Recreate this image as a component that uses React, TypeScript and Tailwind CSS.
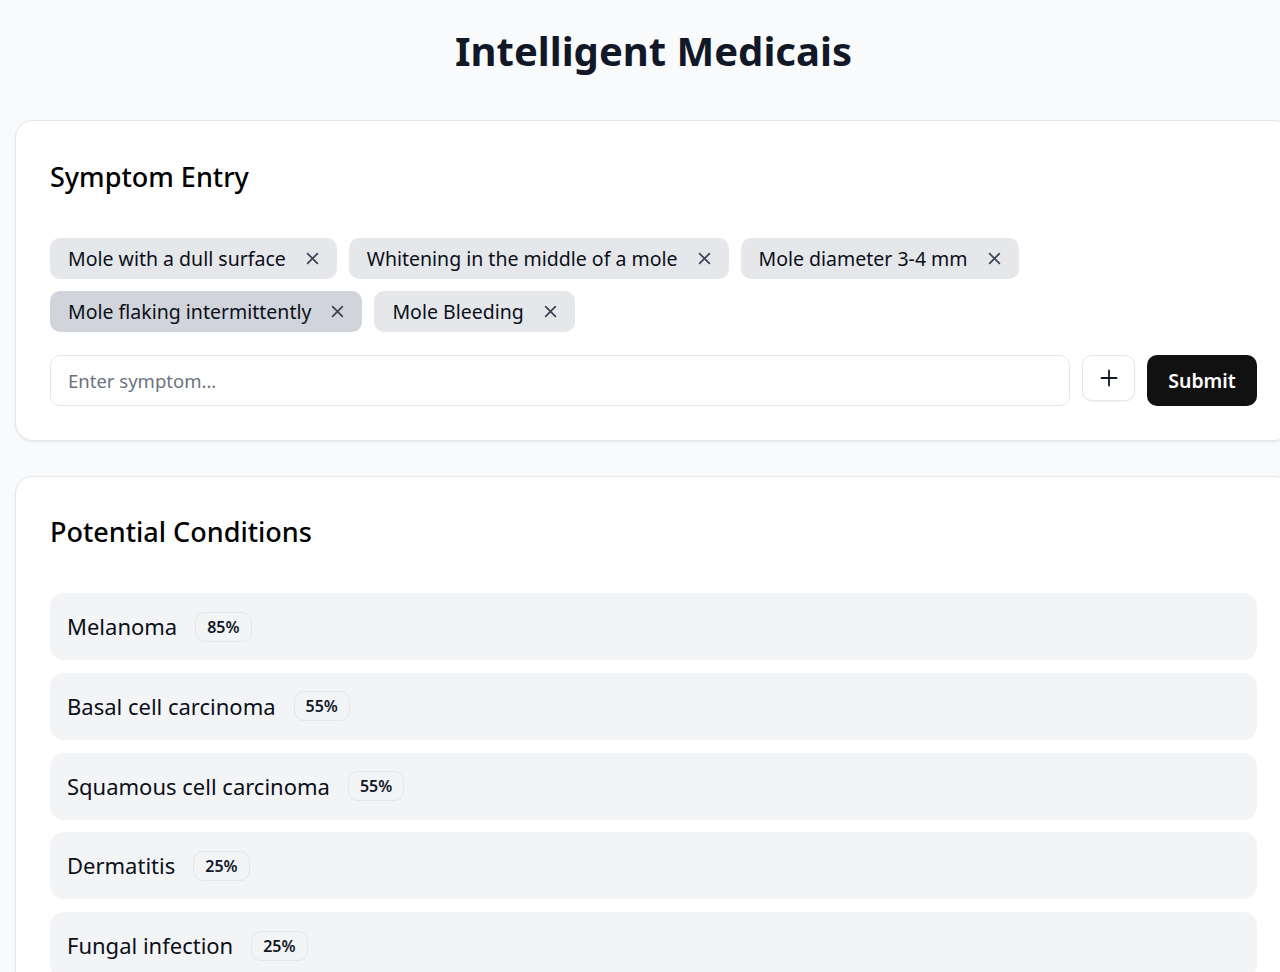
import React from "react";

const font = { fontFamily: '"Noto Sans", "Open Sans", sans-serif' };

function XIcon() {
  return (
    <svg width="13" height="13" viewBox="0 0 12 12" fill="none" stroke="#374151" strokeWidth="1.5" strokeLinecap="round">
      <path d="M1.5 1.5 L10.5 10.5 M10.5 1.5 L1.5 10.5" />
    </svg>
  );
}

function Chip({ label, dark }: { label: string; dark?: boolean }) {
  return (
    <div
      className={
        "flex h-[41px] items-center gap-[20px] rounded-[10px] pl-[18px] pr-[18px] text-[19.5px] text-[#0b0f19] " +
        (dark ? "bg-[#d1d5db]" : "bg-[#e5e7eb]")
      }
    >
      <span>{label}</span>
      <XIcon />
    </div>
  );
}

function Row({ name, pct }: { name: string; pct: string }) {
  return (
    <div className="flex h-[67px] items-center gap-[18px] rounded-[14px] bg-[#f3f4f6] px-[17px]">
      <span className="text-[22px] text-[#0b0f19]">{name}</span>
      <span className="flex h-[30px] items-center rounded-[10px] border border-[#e5e7eb] px-[11px] text-[16px] font-semibold text-[#111827]">
        {pct}
      </span>
    </div>
  );
}

export default function App() {
  return (
    <div className="min-h-[972px] w-[1280px] overflow-hidden bg-[#f9fafb]" style={font}>
      <div className="ml-[15px] w-[1277px]">
        <h1 className="pt-[22px] text-center text-[40px] font-bold leading-[58px] text-[#111827]">
          Intelligent Medicais
        </h1>
        <div className="mt-[40px] rounded-[18px] border border-[#e5e7eb] bg-white px-[34px] pb-[34px] pt-[38px] shadow-[0_1px_3px_rgba(0,0,0,0.08)]">
          <h2 className="text-[27px] font-medium leading-[36px] text-black">Symptom Entry</h2>
          <div className="mt-[43px] flex flex-wrap gap-[12px]">
            <Chip label="Mole with a dull surface" />
            <Chip label="Whitening in the middle of a mole" />
            <Chip label="Mole diameter 3-4 mm" />
            <Chip label="Mole flaking intermittently" dark />
            <Chip label="Mole Bleeding" />
          </div>
          <div className="mt-[23px] flex items-start gap-[12px]">
            <div className="flex h-[51px] flex-1 items-center rounded-[10px] border border-[#e5e7eb] px-[17px] text-[18.5px] text-[#6b7280]">
              Enter symptom...
            </div>
            <button className="flex h-[46px] w-[53px] items-center justify-center rounded-[10px] border border-[#e5e7eb] bg-white shadow-[0_1px_2px_rgba(0,0,0,0.05)]">
              <svg width="18" height="18" viewBox="0 0 18 18" stroke="#111827" strokeWidth="1.8" strokeLinecap="round">
                <path d="M9 1.5 V16.5 M1.5 9 H16.5" />
              </svg>
            </button>
            <button className="h-[51px] w-[110px] rounded-[10px] bg-[#111111] text-[19.5px] font-semibold text-white">
              Submit
            </button>
          </div>
        </div>
        <div className="mt-[35px] rounded-[18px] border border-[#e5e7eb] bg-white px-[34px] pt-[37px] pb-[40px] shadow-[0_1px_3px_rgba(0,0,0,0.08)]">
          <h2 className="text-[27px] font-medium leading-[36px] text-black">Potential Conditions</h2>
          <div className="mt-[43px] flex flex-col gap-[12.75px]">
            <Row name="Melanoma" pct="85%" />
            <Row name="Basal cell carcinoma" pct="55%" />
            <Row name="Squamous cell carcinoma" pct="55%" />
            <Row name="Dermatitis" pct="25%" />
            <Row name="Fungal infection" pct="25%" />
          </div>
        </div>
      </div>
    </div>
  );
}
